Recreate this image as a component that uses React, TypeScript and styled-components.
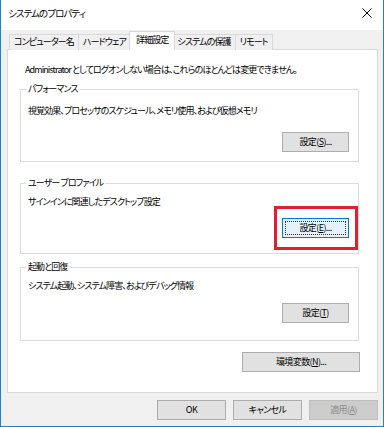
import React from 'react'
import styled, { createGlobalStyle } from 'styled-components'

const GlobalStyle = createGlobalStyle`
    html, body {
        margin: 0;
        padding: 0;
        background: #FFF;
    }
    body {
        font-family: "Noto Sans CJK JP", "Noto Sans", sans-serif;
        font-size: 9px;
        letter-spacing: -0.9px;
        color: #000;
        font-feature-settings: "palt";
    }
`

const Window = styled.div`
    width: 384px;
    height: 427px;
    box-sizing: border-box;
    border: 1px solid #1883D7;
    border-top: none;
    background: #F0F0F0;
    display: flex;
    flex-direction: column;
`

const TitleBar = styled.div`
    height: 30px;
    flex-shrink: 0;
    box-sizing: border-box;
    padding: 0 11px 4px 7px;
    background: #FFF;
    display: flex;
    align-items: center;
    justify-content: space-between;
`

const Title = styled.div`
    font-size: 9.5px;
    line-height: 14px;
`

const Body = styled.div`
    padding: 1px 5px 0 6px;
    display: flex;
    flex-direction: column;
`

const TabRow = styled.div`
    display: flex;
    align-items: flex-end;
    padding-left: 3px;
    margin-bottom: -1px;
    position: relative;
    z-index: 1;
`

const Tab = styled.div<{ $active?: boolean }>`
    box-sizing: border-box;
    height: ${p => (p.$active ? 19 : 16)}px;
    padding: ${p => (p.$active ? '1px 6px 0' : '0 4px')};
    margin: ${p => (p.$active ? '0 -2px' : '0 0 0 -1px')};
    border: 1px solid #D9D9D9;
    border-bottom: none;
    background: ${p => (p.$active ? '#FFF' : '#F0F0F0')};
    position: relative;
    z-index: ${p => (p.$active ? 2 : 1)};
    line-height: 14px;
    white-space: nowrap;
`

const Panel = styled.div`
    width: 371px;
    height: 344px;
    box-sizing: border-box;
    border: 1px solid #D9D9D9;
    background: #FFF;
    padding: 13px 17px 0 12px;
    display: flex;
    flex-direction: column;
`

const Intro = styled.div`
    line-height: 14px;
    margin-left: 5px;
    white-space: nowrap;
`

const Group = styled.fieldset<{ $mt: number; $pt: number; $pb: number }>`
    margin: ${p => p.$mt}px 0 0;
    padding: ${p => p.$pt}px 9px ${p => p.$pb}px 7px;
    border: 1px solid #DCDCDC;
    min-width: 0;
    box-sizing: border-box;
    width: 339px;
    display: flex;
    flex-direction: column;
`

const Legend = styled.legend`
    padding: 0 2px;
    margin-left: -2px;
    line-height: 14px;
`

const Description = styled.div`
    line-height: 14px;
    white-space: nowrap;
`

const ButtonRow = styled.div<{ $mt?: number }>`
    display: flex;
    justify-content: flex-end;
    margin-top: ${p => p.$mt ?? 0}px;
`

const Button = styled.button<{ $w: number; $focused?: boolean }>`
    width: ${p => p.$w}px;
    height: 20px;
    padding: 0;
    box-sizing: border-box;
    font-family: inherit;
    font-size: 9px;
    letter-spacing: -0.6px;
    font-feature-settings: "palt";
    line-height: 14px;
    color: #000;
    background: ${p => (p.$focused ? '#E5F1FB' : '#E1E1E1')};
    border: 1px solid ${p => (p.$focused ? '#0078D7' : '#ADADAD')};
    outline: ${p => (p.$focused ? '1px dotted #333' : 'none')};
    outline-offset: -4px;

    &:disabled {
        background: #CCCCCC;
        border-color: #BFBFBF;
        color: #8C8C8C;
    }
`

const Key = styled.span`
    text-decoration: underline;
    text-underline-offset: 1px;
`

const Marked = styled.span`
    position: relative;
    display: inline-flex;
`

const Highlight = styled.span`
    position: absolute;
    top: -12px;
    bottom: -12px;
    left: -8px;
    right: -9px;
    border: 3px solid #E0202C;
    pointer-events: none;
`

const Footer = styled.div`
    display: flex;
    justify-content: flex-end;
    gap: 7px;
    margin-top: 7px;
`

const CloseIcon = () => (
    <svg width="10" height="10" viewBox="0 0 10 10">
        <path d="M0.5 0.5 L9.5 9.5 M9.5 0.5 L0.5 9.5" stroke="#000" strokeWidth="1" fill="none" />
    </svg>
)

const App = () => {
    return (
        <Window>
            <GlobalStyle />
            <TitleBar>
                <Title>システムのプロパティ</Title>
                <CloseIcon />
            </TitleBar>
            <Body>
                <TabRow>
                    <Tab>コンピューター名</Tab>
                    <Tab>ハードウェア</Tab>
                    <Tab $active>詳細設定</Tab>
                    <Tab>システムの保護</Tab>
                    <Tab>リモート</Tab>
                </TabRow>
                <Panel>
                    <Intro>Administrator としてログオンしない場合は、これらのほとんどは変更できません。</Intro>
                    <Group $mt={5} $pt={8} $pb={9}>
                        <Legend>パフォーマンス</Legend>
                        <Description>視覚効果、プロセッサのスケジュール、メモリ使用、および仮想メモリ</Description>
                        <ButtonRow $mt={14}>
                            <Button $w={67}>設定(<Key>S</Key>)...</Button>
                        </ButtonRow>
                    </Group>
                    <Group $mt={14} $pt={5} $pb={15}>
                        <Legend>ユーザー プロファイル</Legend>
                        <Description>サインインに関連したデスクトップ設定</Description>
                        <ButtonRow $mt={9}>
                            <Marked>
                                <Button $w={67} $focused>設定(<Key>E</Key>)...</Button>
                                <Highlight />
                            </Marked>
                        </ButtonRow>
                    </Group>
                    <Group $mt={6} $pt={5} $pb={17}>
                        <Legend>起動と回復</Legend>
                        <Description>システム起動、システム障害、およびデバッグ情報</Description>
                        <ButtonRow $mt={10}>
                            <Button $w={67}>設定(<Key>T</Key>)</Button>
                        </ButtonRow>
                    </Group>
                    <ButtonRow $mt={11}>
                        <Button $w={118}>環境変数(<Key>N</Key>)...</Button>
                    </ButtonRow>
                </Panel>
                <Footer>
                    <Button $w={69}>OK</Button>
                    <Button $w={69}>キャンセル</Button>
                    <Button $w={69} disabled>適用(<Key>A</Key>)</Button>
                </Footer>
            </Body>
        </Window>
    )
}

export default App
